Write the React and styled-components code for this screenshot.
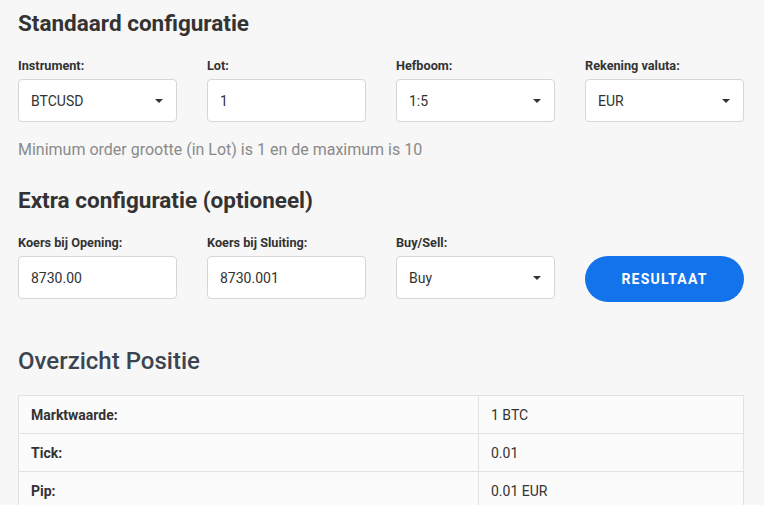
import React from 'react'
import styled, { createGlobalStyle } from 'styled-components'

const GlobalStyle = createGlobalStyle`
  body {
    margin: 0;
    background: #f7f7f7;
    font-family: Roboto, "Liberation Sans", Arial, sans-serif;
    color: #333;
  }
`

const Page = styled.div`
  padding: 0 20px 0 18px;
  width: 726px;
`

const Title = styled.h2`
  margin: 0;
  padding-top: ${p => p.top}px;
  font-size: 22.5px;
  font-weight: 700;
  line-height: 28px;
  color: #333;
`

const Grid = styled.div`
  display: grid;
  grid-template-columns: repeat(4, 159px);
  column-gap: 30px;
  margin-top: ${p => p.top}px;
  align-items: end;
`

const Field = styled.div`
  display: flex;
  flex-direction: column;
`

const Label = styled.label`
  font-size: 12.7px;
  font-weight: 700;
  line-height: 14px;
  color: #333;
  margin-bottom: 6px;
`

const Box = styled.div`
  box-sizing: border-box;
  height: 43px;
  background: #fff;
  border: 1px solid #d6d6d6;
  border-radius: 4px;
  display: flex;
  align-items: center;
  justify-content: space-between;
  padding: 0 13px 0 12px;
  font-size: 14px;
  color: #333;
`

const Caret = styled.span`
  width: 0;
  height: 0;
  border-left: 4px solid transparent;
  border-right: 4px solid transparent;
  border-top: 4px solid #333;
`

const Hint = styled.p`
  margin: 19px 0 0;
  font-size: 16px;
  line-height: 18px;
  color: #8a8a8a;
`

const Button = styled.button`
  height: 46px;
  border: none;
  border-radius: 23px;
  background: #1273eb;
  color: #fff;
  font-family: inherit;
  font-size: 14px;
  font-weight: 700;
  letter-spacing: 1.2px;
  margin-bottom: -3px;
  cursor: pointer;
`

const SubTitle = styled.h2`
  margin: 48px 0 0;
  font-size: 24px;
  font-weight: 500;
  line-height: 28px;
  color: #3c4450;
`

const Table = styled.table`
  margin-top: 20px;
  width: 726px;
  border-collapse: collapse;
  background: #fbfbfb;
`

const Cell = styled.td`
  border: 1px solid #e2e2e2;
  height: 38px;
  padding: 0 12px;
  font-size: 14px;
  font-weight: ${p => (p.head ? 700 : 400)};
  color: #333;
  width: ${p => (p.head ? '460px' : 'auto')};
  box-sizing: border-box;
`

const Select = ({ value }) => (
  <Box>
    {value}
    <Caret />
  </Box>
)

const rows = [
  ['Marktwaarde:', '1 BTC'],
  ['Tick:', '0.01'],
  ['Pip:', '0.01 EUR'],
]

export default function App() {
  return (
    <Page>
      <GlobalStyle />
      <Title top={9}>Standaard configuratie</Title>
      <Grid top={22}>
        <Field>
          <Label>Instrument:</Label>
          <Select value="BTCUSD" />
        </Field>
        <Field>
          <Label>Lot:</Label>
          <Box>1</Box>
        </Field>
        <Field>
          <Label>Hefboom:</Label>
          <Select value="1:5" />
        </Field>
        <Field>
          <Label>Rekening valuta:</Label>
          <Select value="EUR" />
        </Field>
      </Grid>
      <Hint>Minimum order grootte (in Lot) is 1 en de maximum is 10</Hint>
      <Title top={27}>Extra configuratie (optioneel)</Title>
      <Grid top={22}>
        <Field>
          <Label>Koers bij Opening:</Label>
          <Box>8730.00</Box>
        </Field>
        <Field>
          <Label>Koers bij Sluiting:</Label>
          <Box>8730.001</Box>
        </Field>
        <Field>
          <Label>Buy/Sell:</Label>
          <Select value="Buy" />
        </Field>
        <Button>RESULTAAT</Button>
      </Grid>
      <SubTitle>Overzicht Positie</SubTitle>
      <Table>
        <tbody>
          {rows.map(([k, v]) => (
            <tr key={k}>
              <Cell head>{k}</Cell>
              <Cell>{v}</Cell>
            </tr>
          ))}
        </tbody>
      </Table>
    </Page>
  )
}
